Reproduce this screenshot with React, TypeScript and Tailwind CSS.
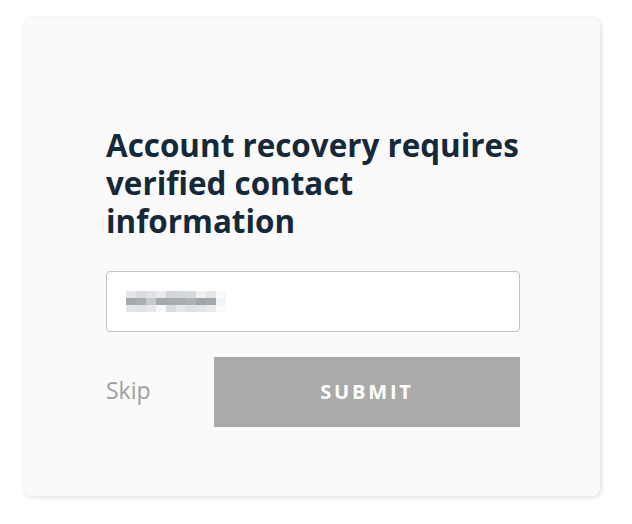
import React from "react";

const mosaic: string[][] = [
  ["#e3e5e8", "#d8dbdf", "#e0e2e5", "#e8eaec", "#d3d6da", "#d5d8dc", "#d7dadd", "#eef0f1", "#e4e6e8", "#f8f9f9"],
  ["#a4a9ae", "#a9aeb3", "#c6c9cd", "#a5aab0", "#a6abb0", "#a8adb2", "#aeb2b7", "#9fa4aa", "#a3a8ad", "#f3f4f5"],
  ["#e2e5e8", "#dfe1e4", "#e5e7ea", "#f7f7f8", "#d9dcdf", "#e6e8ea", "#dfe2e5", "#e2e4e7", "#e9ebed", "#fafafa"],
];

export default function App() {
  return (
    <div className="w-[632px] h-[524px] bg-white pt-[18px] pl-[24px]" style={{ fontFamily: '"Open Sans", "Noto Sans", Arial, sans-serif' }}>
      <div className="w-[576px] h-[478px] bg-[#fafafa] rounded-[8px] shadow-[1px_1px_5px_0_rgba(0,0,0,0.15)] pl-[82px] pr-[80px] pt-[108px]">
        <h1 className="text-[31.4px] leading-[38px] font-bold text-[#152939]">
          Account recovery requires verified contact information
        </h1>
        <div className="mt-[31px] h-[61px] bg-white border-[1.5px] border-[#c2c2c2] rounded-[4px] flex items-center pl-[19px]">
          <div className="flex flex-col">
            {mosaic.map((row, r) => (
              <div key={r} className="flex">
                {row.map((c, i) => (
                  <div key={i} className="w-[10px] h-[7px]" style={{ backgroundColor: c }} />
                ))}
              </div>
            ))}
          </div>
        </div>
        <div className="mt-[25px] flex items-center">
          <span className="w-[108px] text-[23px] text-[#9e9e9e] leading-none -mt-[3px]">Skip</span>
          <button className="flex-1 h-[70px] bg-[#aaaaaa] text-white text-[20px] font-bold tracking-[2.8px]">
            SUBMIT
          </button>
        </div>
      </div>
    </div>
  );
}
